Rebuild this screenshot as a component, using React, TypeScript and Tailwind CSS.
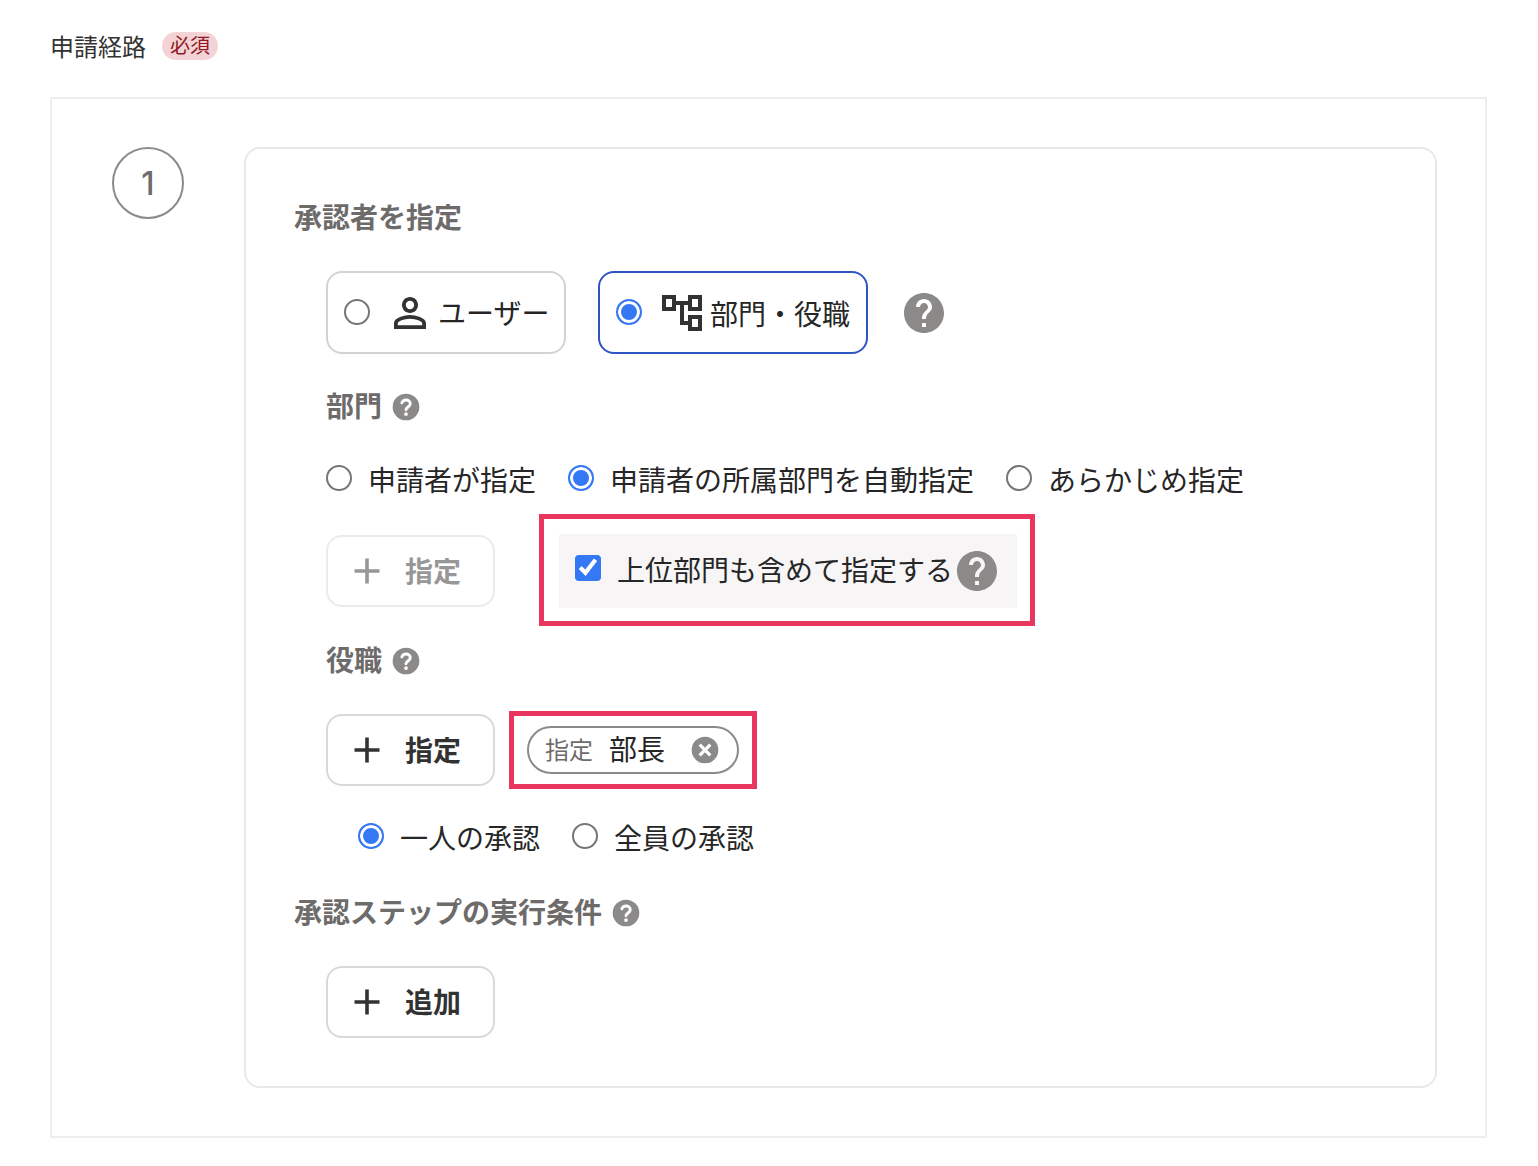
import { useState } from "react";
import type { ReactNode } from "react";
import { MdHelp, MdPersonOutline } from "react-icons/md";

const radioClass =
  "mb-0.5 size-[26px] shrink-0 appearance-none rounded-full border-2 border-[#767676] bg-white checked:border-[#3478f6] checked:bg-[#3478f6] checked:shadow-[inset_0_0_0_3px_#fff]";

const optionCardClass =
  "flex h-[83px] items-center rounded-2xl border-2 border-[#d6d2d2] pl-4 whitespace-nowrap has-checked:border-[#2f55c4]";

const optionIconClass = "mr-1 ml-4 size-12 shrink-0 text-[#323232]";

// Large question mark button
const HelpButton = () => (
  <button type="button" aria-label="ヘルプ" className="shrink-0 text-[#8c8989]">
    <MdHelp className="size-12" />
  </button>
);

// Small rounded question mark used next to the headings
const SmallHelpButton = () => (
  <button type="button" aria-label="ヘルプ" className="shrink-0 pt-0.5">
    <svg viewBox="0 0 24 24" fill="none" className="size-8">
      <circle cx="12" cy="12" r="10" fill="#8c8989" />
      <path
        d="M8.9 8.9C9.4 7.5 10.5 6.7 12 6.7c1.8 0 3.2 1.2 3.2 2.9 0 2.3-3.2 2.5-3.2 4.5"
        stroke="#fff"
        strokeWidth="2.2"
        strokeLinecap="round"
      />
      <circle cx="12" cy="17.3" r="1.4" fill="#fff" />
    </svg>
  </button>
);

const Heading = ({ children, help }: { children: ReactNode; help?: boolean }) => (
  <div className="flex h-10 items-center gap-2">
    <h2 className="pb-0.5 text-[28px] leading-10 font-bold text-[#6e6b6b]">{children}</h2>
    {help && <SmallHelpButton />}
  </div>
);

type AddButtonProps = { children: ReactNode; disabled?: boolean };

const AddButton = ({ children, disabled }: AddButtonProps) => (
  <button
    type="button"
    disabled={disabled}
    className="flex h-[72px] shrink-0 items-center gap-[25px] rounded-2xl border-2 border-[#d9d9d9] pr-8 pl-[26px] text-[28px] leading-10 font-bold text-[#323232] disabled:opacity-50"
  >
    <svg viewBox="0 0 26 26" className="size-[26px]" stroke="currentColor" strokeWidth="3.6">
      <path d="M13 0.500v25M0.500 13h25" />
    </svg>
    <span className="pb-0.5">{children}</span>
  </button>
);

type RadioGroupProps = {
  name: string;
  options: string[];
  value: string;
  onChange: (value: string) => void;
};

const RadioGroup = ({ name, options, value, onChange }: RadioGroupProps) => (
  <div role="radiogroup" className="flex flex-wrap gap-x-8">
    {options.map((option) => (
      <label key={option} className="flex h-10 items-center gap-4">
        <input
          type="radio"
          name={name}
          className={radioClass}
          checked={value === option}
          onChange={() => onChange(option)}
        />
        <span>{option}</span>
      </label>
    ))}
  </div>
);

export default function App() {
  const [approver, setApprover] = useState("role");
  const [department, setDepartment] = useState("申請者の所属部門を自動指定");
  const [includeUpper, setIncludeUpper] = useState(true);
  const [approval, setApproval] = useState("一人の承認");

  return (
    <main className="bg-white pt-8 pr-[51px] pb-7 pl-[50px] font-['Noto_Sans_CJK_JP',sans-serif] text-[28px] leading-10 text-[#262626]">
      <header className="flex h-7 items-center gap-4">
        <h1 className="text-2xl text-[#323232]">申請経路</h1>
        <span className="h-7 rounded-full bg-[#f4d3d6] px-2 text-xl leading-[26px] text-[#8f1822]">
          必須
        </span>
      </header>

      <section className="mt-[37px] flex items-start gap-[60px] border-2 border-[#eeeeee] py-12 pr-12 pl-[60px]">
        <div className="flex size-[72px] shrink-0 items-center justify-center rounded-full border-2 border-[#8c8989] pt-0.5 font-['Inter',sans-serif] text-[32px] font-medium text-[#6e6b6b]">
          1
        </div>

        <div className="flex-1 rounded-2xl border-2 border-[#e8e8e8] p-12">
          <Heading>承認者を指定</Heading>

          <div className="mt-[34px] flex items-center gap-8 pl-8">
            <label className={`${optionCardClass} w-60`}>
              <input
                type="radio"
                name="approver"
                className={radioClass}
                checked={approver === "user"}
                onChange={() => setApprover("user")}
              />
              <MdPersonOutline className={optionIconClass} />
              <span className="pb-0.5">ユーザー</span>
            </label>
            <label className={`${optionCardClass} pr-4`}>
              <input
                type="radio"
                name="approver"
                className={radioClass}
                checked={approver === "role"}
                onChange={() => setApprover("role")}
              />
              <svg viewBox="0 0 24 24" fill="currentColor" className={optionIconClass}>
                <path d="M22 11V3h-7v3H9V3H2v8h7V8h2v10h4v3h7v-8h-7v3h-2V8h2v3h7zM7 9H4V5h3v4zm10 6h3v4h-3v-4zm0-10h3v4h-3V5z" />
              </svg>
              <span>部門・役職</span>
            </label>
            <HelpButton />
          </div>

          <div className="mt-8 pl-8">
            <Heading help>部門</Heading>
            <div className="mt-[33px]">
              <RadioGroup
                name="department"
                options={["申請者が指定", "申請者の所属部門を自動指定", "あらかじめ指定"]}
                value={department}
                onChange={setDepartment}
              />
            </div>
            <div className="mt-[35px] flex items-center gap-16">
              <AddButton disabled>指定</AddButton>
              <div className="relative flex h-[74px] items-center bg-[#f7f5f6] px-4">
                <label className="flex items-center gap-4 pb-1 whitespace-nowrap">
                  <span className="mb-0.5 grid size-[26px]">
                    <input
                      type="checkbox"
                      className="col-start-1 row-start-1 size-[26px] appearance-none rounded border-2 border-[#767676] bg-white checked:border-[#3478f6] checked:bg-[#3478f6]"
                      checked={includeUpper}
                      onChange={(e) => setIncludeUpper(e.target.checked)}
                    />
                    {includeUpper && (
                      <svg viewBox="0 0 26 26" fill="none" className="pointer-events-none col-start-1 row-start-1 size-[26px]">
                        <path d="M5.2 12.600l5.200 5.200L20.500 4.800" stroke="#fff" strokeWidth="4.200" />
                      </svg>
                    )}
                  </span>
                  <span>上位部門も含めて指定する</span>
                </label>
                <HelpButton />
                {/* highlight frame */}
                <div className="pointer-events-none absolute -top-5 -right-[18px] -bottom-[18px] -left-5 border-5 border-[#e9365f]" />
              </div>
            </div>
          </div>

          <div className="mt-8 pl-8">
            <Heading help>役職</Heading>
            <div className="mt-[34px] flex items-center gap-8">
              <AddButton>指定</AddButton>
              <div className="relative">
                <div className="flex h-12 items-center rounded-full border-2 border-[#8c8989] px-4 whitespace-nowrap">
                  <span className="pb-0.5 text-2xl text-[#6e6b6b]">指定</span>
                  <span className="ml-4 pb-1">部長</span>
                  <button type="button" aria-label="削除" className="ml-6">
                    <svg viewBox="0 0 24 24" fill="none" className="size-8">
                      <circle cx="12" cy="12" r="10" fill="#8c8989" />
                      <path d="M8 8l8 8M16 8l-8 8" stroke="#fff" strokeWidth="2.4" />
                    </svg>
                  </button>
                </div>
                <div className="pointer-events-none absolute -inset-x-[18px] -inset-y-[15px] border-5 border-[#e9365f]" />
              </div>
            </div>
            <div className="mt-[31px] pl-8">
              <RadioGroup
                name="approval"
                options={["一人の承認", "全員の承認"]}
                value={approval}
                onChange={setApproval}
              />
            </div>
          </div>

          <div className="mt-[35px]">
            <Heading help>承認ステップの実行条件</Heading>
            <div className="mt-[34px] pl-8">
              <AddButton>追加</AddButton>
            </div>
          </div>
        </div>
      </section>
    </main>
  );
}
